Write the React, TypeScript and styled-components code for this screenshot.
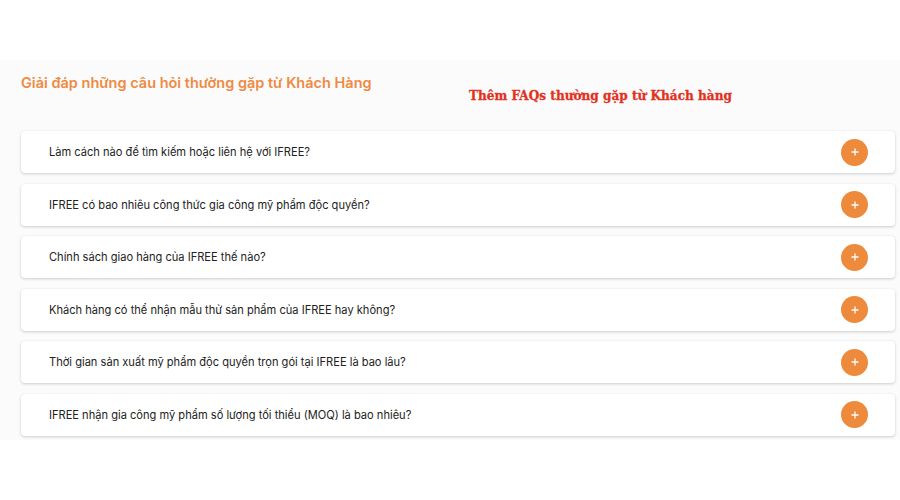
import React from "react";
import styled, { createGlobalStyle } from "styled-components";

const Global = createGlobalStyle`
  html, body { margin: 0; padding: 0; background: #ffffff; }
  body { font-family: Inter, "Noto Sans", sans-serif; }
`;

const Page = styled.div`
  width: 900px;
  height: 500px;
  padding-top: 60px;
  box-sizing: border-box;
  background: #ffffff;
`;

const Section = styled.section`
  height: 380px;
  box-sizing: border-box;
  padding: 13px 5px 0 21px;
  background: #fbfbfb;
`;

const Header = styled.div`
  display: flex;
  align-items: flex-start;
  height: 58px;
`;

const Title = styled.h2`
  margin: 0;
  font-size: 14.5px;
  font-weight: 600;
  color: #ee8a43;
  line-height: 20px;
  width: 448px;
`;

const Note = styled.div`
  margin-top: 13px;
  font-family: "DejaVu Serif", serif;
  font-weight: 700;
  font-size: 12.1px;
  color: #e1311f;
  line-height: 20px;
  -webkit-text-stroke: 0.3px #e1311f;
`;

const List = styled.div`
  display: flex;
  flex-direction: column;
  gap: 10.6px;
  width: 874px;
`;

const Card = styled.div`
  height: 42px;
  box-sizing: border-box;
  display: flex;
  align-items: center;
  justify-content: space-between;
  padding: 0 27px 0 28px;
  background: #fff;
  border-radius: 4px;
  box-shadow: 0 1px 3px rgba(0, 0, 0, 0.18), 0 0 1px rgba(0, 0, 0, 0.08);
`;

const Question = styled.span`
  font-size: 11.1px;
  color: #222;
`;

const PlusButton = styled.button`
  width: 27px;
  height: 27px;
  border-radius: 50%;
  border: none;
  padding: 0;
  background: #ee8a3c;
  display: flex;
  align-items: center;
  justify-content: center;
  cursor: pointer;
`;

const questions = [
  "Làm cách nào để tìm kiếm hoặc liên hệ với IFREE?",
  "IFREE có bao nhiêu công thức gia công mỹ phẩm độc quyền?",
  "Chính sách giao hàng của IFREE thế nào?",
  "Khách hàng có thể nhận mẫu thử sản phẩm của IFREE hay không?",
  "Thời gian sản xuất mỹ phẩm độc quyền trọn gói tại IFREE là bao lâu?",
  "IFREE nhận gia công mỹ phẩm số lượng tối thiểu (MOQ) là bao nhiêu?",
];

export default function App() {
  return (
    <>
      <Global />
      <Page>
        <Section>
          <Header>
            <Title>Giải đáp những câu hỏi thường gặp từ Khách Hàng</Title>
            <Note>Thêm FAQs thường gặp từ Khách hàng</Note>
          </Header>
          <List>
            {questions.map((q) => (
              <Card key={q}>
                <Question>{q}</Question>
                <PlusButton aria-label="Mở">
                  <svg width="8" height="8" viewBox="0 0 8 8">
                    <path d="M4 1v6M1 4h6" stroke="#fff" strokeWidth="1.3" strokeLinecap="round" />
                  </svg>
                </PlusButton>
              </Card>
            ))}
          </List>
        </Section>
      </Page>
    </>
  );
}
